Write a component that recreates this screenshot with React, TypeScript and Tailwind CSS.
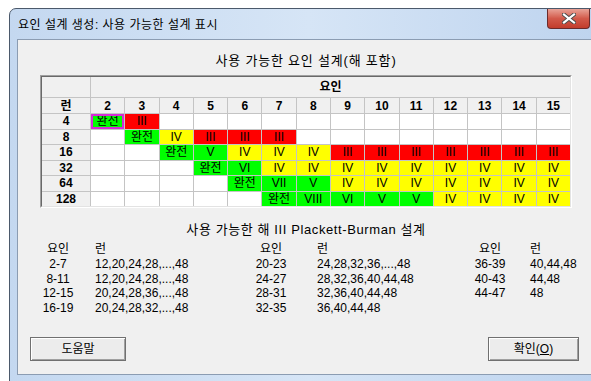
import React from 'react'

type Tone = 'w' | 'g' | 'r' | 'y'

const tones: Record<Tone, string> = {
  w: 'bg-white',
  g: 'bg-[#00ff00]',
  r: 'bg-[#ff0000]',
  y: 'bg-[#ffff00]',
}

const rep = (code: string, n: number) => Array.from({ length: n }, () => code)

const runs: { run: string; cells: string[] }[] = [
  { run: '4', cells: ['g:완전', 'r:III', ...rep('w', 12)] },
  { run: '8', cells: ['w', 'g:완전', 'y:IV', 'r:III', 'r:III', 'r:III', ...rep('w', 8)] },
  { run: '16', cells: ['w', 'w', 'g:완전', 'g:V', 'y:IV', 'y:IV', 'y:IV', ...rep('r:III', 7)] },
  { run: '32', cells: [...rep('w', 3), 'g:완전', 'g:VI', 'y:IV', 'y:IV', ...rep('y:IV', 7)] },
  { run: '64', cells: [...rep('w', 4), 'g:완전', 'g:VII', 'g:V', ...rep('y:IV', 7)] },
  { run: '128', cells: [...rep('w', 5), 'g:완전', 'g:VIII', 'g:VI', 'g:V', 'g:V', ...rep('y:IV', 4)] },
]

const factors = ['2', '3', '4', '5', '6', '7', '8', '9', '10', '11', '12', '13', '14', '15']

const groups = [
  {
    w: 'w-[213px]',
    gap: 'gap-x-[19px]',
    rows: [
      ['2-7', '12,20,24,28,...,48'],
      ['8-11', '12,20,24,28,...,48'],
      ['12-15', '20,24,28,36,...,48'],
      ['16-19', '20,24,28,32,...,48'],
    ],
  },
  {
    w: 'w-[219px]',
    gap: 'gap-x-[28px]',
    rows: [
      ['20-23', '24,28,32,36,...,48'],
      ['24-27', '28,32,36,40,44,48'],
      ['28-31', '32,36,40,44,48'],
      ['32-35', '36,40,44,48'],
    ],
  },
  {
    w: 'w-[100px]',
    gap: 'gap-x-[22px]',
    rows: [
      ['36-39', '40,44,48'],
      ['40-43', '44,48'],
      ['44-47', '48'],
    ],
  },
]

const DesignCell = ({ code, sel }: { code: string; sel: boolean }) => {
  const [tone, label] = code.split(':') as [Tone, string?]
  return (
    <div
      className={`flex items-center justify-center leading-none ${tones[tone]} ${
        sel ? 'outline-2 -outline-offset-2 outline-[#d62bd6]' : ''
      }`}
    >
      {label}
    </div>
  )
}

const DesignTable = () => (
  <div className="border-t border-l border-[#a0a0a0] border-r border-b border-r-white border-b-white">
    <div className="border-t border-l border-[#696969] border-r border-b border-r-[#e3e3e3] border-b-[#e3e3e3]">
      <div className="grid grid-cols-[48px_repeat(14,minmax(0,1fr))] grid-rows-[20px_15px_repeat(6,14.5px)] gap-px bg-[#c4c4c4] text-[12px]">
        <div className="bg-[#f0f0f0]" />
        <div className="col-span-14 flex items-center justify-center bg-[#f0f0f0] font-bold">요인</div>
        <div className="flex items-center justify-center bg-[#f0f0f0] font-bold">런</div>
        {factors.map((f) => (
          <div key={f} className="flex items-center justify-center bg-[#f0f0f0] font-bold">
            {f}
          </div>
        ))}
        {runs.map((r, ri) => (
          <React.Fragment key={r.run}>
            <div className="flex items-center justify-center bg-[#f0f0f0] font-bold">{r.run}</div>
            {r.cells.map((c, ci) => (
              <DesignCell key={ci} code={c} sel={ri === 0 && ci === 0} />
            ))}
          </React.Fragment>
        ))}
      </div>
    </div>
  </div>
)

const WinButton = ({ children }: { children: React.ReactNode }) => (
  <button className="flex h-[24px] w-full items-center justify-center border border-[#707070] bg-[#ececec] text-[12px] shadow-[inset_1px_1px_0_#ffffff,inset_-1px_-1px_0_#a0a0a0]">
    {children}
  </button>
)

export default function App() {
  return (
    <div className="h-[381px] w-[591px] overflow-hidden bg-white pl-[9px] pt-[8px] font-['Liberation_Sans','Noto_Sans_CJK_KR',sans-serif] text-black">
      <div className="flex h-[380px] w-[600px] flex-col rounded-t-[7px] border border-[#4b596b] bg-gradient-to-r from-[#c4d8f0] via-[#d6e5f6] to-[#bdd3ee]">
        {/* 제목 표시줄 */}
        <div className="flex h-[30px] items-start">
          <div className="flex-1 pl-[8px] pt-[8px] text-[12px] leading-[16px] tracking-[0.5px]">
            요인 설계 생성: 사용 가능한 설계 표시
          </div>
          <div className="mr-[18px] flex h-[20px] w-[43px] items-center justify-center rounded-b-[4px] border border-t-0 border-[#6b2b2b] bg-gradient-to-b from-[#e8a297] via-[#d2594a] to-[#c23c2c]">
            <svg width="14" height="11" viewBox="0 0 14 11">
              <path
                d="M2 1.5 L12 9.5 M12 1.5 L2 9.5"
                stroke="#4a4a4a"
                strokeWidth="4"
                strokeLinecap="square"
              />
              <path
                d="M2 1.5 L12 9.5 M12 1.5 L2 9.5"
                stroke="#ffffff"
                strokeWidth="2.2"
                strokeLinecap="square"
              />
            </svg>
          </div>
        </div>

        {/* 클라이언트 영역 */}
        <div className="mx-[7px] h-[336px] border border-[#8b9cb2] bg-[#f0f0f0]">
          <div className="ml-[22px] w-[532px]">
            <div className="pt-[13px] text-center text-[13px] leading-[16px] tracking-[0.8px]">
              사용 가능한 요인 설계(해 포함)
            </div>
            <div className="mt-[6px]">
              <DesignTable />
            </div>
            <div className="mt-[14px] text-center text-[13px] leading-[16px] tracking-[0.6px]">
              사용 가능한 해 III Plackett-Burman 설계
            </div>
            <div className="mt-[4px] flex text-[12px] leading-[14.75px]">
              {groups.map((g, gi) => (
                <div key={gi} className={`grid grid-cols-[36px_auto] content-start justify-start ${g.gap} ${g.w}`}>
                  <div className="text-center">요인</div>
                  <div>런</div>
                  {g.rows.map(([f, n]) => (
                    <React.Fragment key={f}>
                      <div className="whitespace-nowrap text-center">{f}</div>
                      <div className="whitespace-nowrap">{n}</div>
                    </React.Fragment>
                  ))}
                </div>
              ))}
            </div>
          </div>
          <div className="ml-[12px] mt-[21px] flex w-[549px] justify-between">
            <div className="w-[96px]">
              <WinButton>도움말</WinButton>
            </div>
            <div className="w-[91px]">
              <WinButton>
                확인(<span className="underline">O</span>)
              </WinButton>
            </div>
          </div>
        </div>
      </div>
    </div>
  )
}
